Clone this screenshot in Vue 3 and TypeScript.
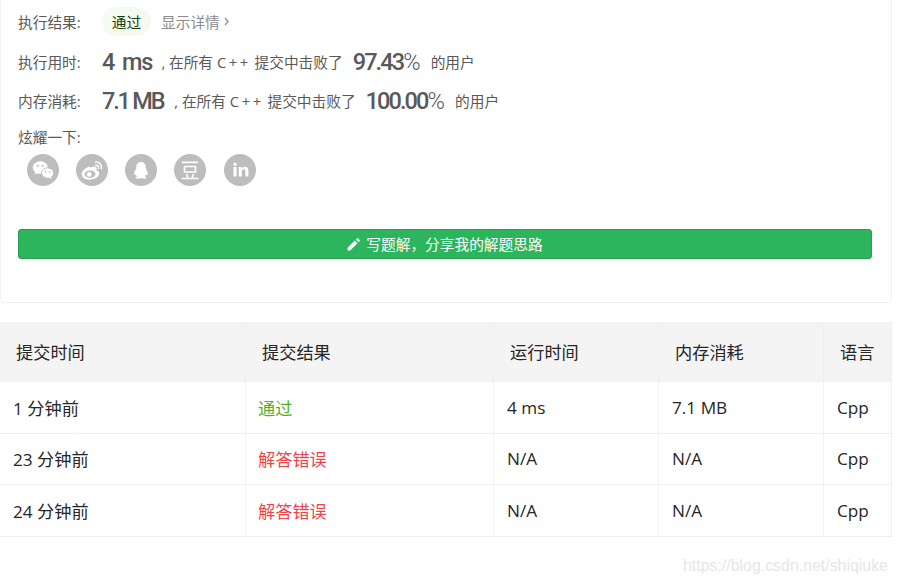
<script setup lang="ts">
interface Sub { time: string; result: string; ok: boolean; run: string; mem: string; lang: string }
const subs: Sub[] = [
  { time: '1 分钟前', result: '通过', ok: true, run: '4 ms', mem: '7.1 MB', lang: 'Cpp' },
  { time: '23 分钟前', result: '解答错误', ok: false, run: 'N/A', mem: 'N/A', lang: 'Cpp' },
  { time: '24 分钟前', result: '解答错误', ok: false, run: 'N/A', mem: 'N/A', lang: 'Cpp' },
]
</script>

<template>
  <div class="page">
    <section class="card">
      <div class="row first">
        <span class="label">执行结果:</span>
        <span class="pill">通过</span>
        <span class="detail">显示详情 <svg width="6" height="9" viewBox="0 0 6 9"><path d="M1 1l3.2 3.5L1 8" fill="none" stroke="#8c8c8c" stroke-width="1.2"/></svg></span>
      </div>
      <div class="row stat">
        <span class="label">执行用时:</span>
        <b class="big">4 ms</b>
        <span class="note comma">, 在所有 <span class="cpp">C++</span> 提交中击败了</span>
        <b class="big pct">97.43<i>%</i></b>
        <span class="note">的用户</span>
      </div>
      <div class="row stat mem">
        <span class="label">内存消耗:</span>
        <b class="big tight">7.1 MB</b>
        <span class="note comma wide">, 在所有 <span class="cpp">C++</span> 提交中击败了</span>
        <b class="big pct">100.00<i>%</i></b>
        <span class="note">的用户</span>
      </div>
      <div class="share-label">炫耀一下:</div>
      <div class="share">
        <span class="ic">
          <svg viewBox="0 0 32 32" width="32" height="32" fill="#fff">
            <ellipse cx="13.3" cy="13.6" rx="7.6" ry="6.3"/>
            <path d="M8.5 17.5l-1 3.2 3.6-1.9z"/>
            <ellipse cx="20.6" cy="19" rx="6.2" ry="5.2" stroke="#bdbdbd" stroke-width="1"/>
            <path d="M23.5 22.5l1.6 2.6-3.8-1.6z"/>
            <circle cx="10.8" cy="11.8" r="1.1" fill="#bdbdbd"/><circle cx="15.8" cy="11.8" r="1.1" fill="#bdbdbd"/>
            <circle cx="18.5" cy="17.8" r=".9" fill="#bdbdbd"/><circle cx="22.7" cy="17.8" r=".9" fill="#bdbdbd"/>
          </svg>
        </span>
        <span class="ic">
          <svg viewBox="0 0 32 32" width="32" height="32">
            <path d="M14 12.6c-4.8 1-8.4 4.6-8.2 8.2.2 3.2 4 5.2 8.4 4.9 5-.3 9.2-3.2 9-6.6-.1-1.7-1.5-2.5-2.8-2.9.8-1.9.3-3.100-1.200-3.500-1.300-.3-3.300.1-5.200 1z" fill="#fff"/>
            <ellipse cx="14" cy="20.200" rx="5.400" ry="3.700" fill="#bdbdbd"/>
            <circle cx="13.200" cy="20.400" r="2.300" fill="#fff"/>
            <path d="M19.500 8.200c3.800-.6 6.700 2.600 5.700 6.500M19.900 11.300c1.900-.3 3.100 1.200 2.600 3" fill="none" stroke="#fff" stroke-width="1.500" stroke-linecap="round"/>
          </svg>
        </span>
        <span class="ic">
          <svg viewBox="0 0 32 32" width="32" height="32" fill="#fff">
            <path d="M16 8c-3 0-4.700 2.200-4.700 5 0 .8 0 1.300-.3 1.900-.9 1.700-2.200 3.800-1.800 5.800.3.800.9.300 1.500-.5.300 1 .8 1.800 1.500 2.400-1 .4-1.800.9-1.600 1.500.2.700 2.900.6 4.400.1.400-.1 1.600-.1 2 0 1.500.5 4.200.6 4.400-.1.200-.6-.6-1.100-1.600-1.500.7-.6 1.200-1.400 1.500-2.400.6.800 1.200 1.300 1.500.5.400-2-.9-4.100-1.800-5.800-.3-.6-.3-1.100-.3-1.900 0-2.800-1.700-5-4.700-5z"/>
          </svg>
        </span>
        <span class="ic">
          <svg viewBox="0 0 32 32" width="32" height="32" fill="none" stroke="#fff" stroke-width="1.600">
            <path d="M8 8.400h16M10.500 12.500h11v5.500h-11zM7.500 24.500h17M12.500 20l1.500 4.300M19.500 20l-1.500 4.300"/>
          </svg>
        </span>
        <span class="ic in">
          <svg viewBox="0 0 32 32" width="32" height="32" fill="#fff">
            <rect x="9.500" y="13" width="3" height="9.500"/>
            <circle cx="11" cy="10.300" r="1.700"/>
            <path d="M14.800 13h2.900v1.400c.6-1 1.700-1.700 3.100-1.700 2.700 0 3.600 1.700 3.600 4.400v5.400h-3v-4.900c0-1.300-.4-2.300-1.600-2.300-1.300 0-2 1-2 2.300v4.900h-3z"/>
          </svg>
        </span>
      </div>
      <button class="write" type="button">
        <svg width="14" height="14" viewBox="0 0 14 14" fill="#fff"><path d="M0.500 10.800V13.500H3.200L10.500 6.200 7.800 3.500zM12.800 3.900c.3-.3.3-.7 0-1L11.100 1.200c-.3-.3-.7-.3-1 0L8.800 2.500 11.500 5.200z"/></svg>
        <span class="write-text">写题解&#65292;分享我的解题思路</span>
      </button>
    </section>

    <div class="table">
      <div class="tr head">
        <div class="td c1">提交时间</div>
        <div class="td c2">提交结果</div>
        <div class="td c3">运行时间</div>
        <div class="td c4">内存消耗</div>
        <div class="td c5">语言</div>
      </div>
      <div v-for="s in subs" :key="s.time" class="tr">
        <div class="td c1">{{ s.time }}</div>
        <div class="td c2" :class="s.ok ? 'ok' : 'bad'">{{ s.result }}</div>
        <div class="td c3">{{ s.run }}</div>
        <div class="td c4">{{ s.mem }}</div>
        <div class="td c5">{{ s.lang }}</div>
      </div>
    </div>

    <div class="mark">https://blog.csdn.net/shiqiuke</div>
  </div>
</template>

<style>
html, body { margin: 0; background: #fff; }
</style>

<style scoped>
.page {
  width: 897px;
  height: 583px;
  overflow: hidden;
  position: relative;
  font-family: "Open Sans", "Noto Sans CJK SC", sans-serif;
  color: #262626;
}
.card {
  box-sizing: border-box;
  width: 892px;
  height: 303px;
  padding: 6px 19px 0 17px;
  border: 1px solid #f0f0f0;
  border-top: 0;
  border-radius: 0 0 5px 5px;
}
.row { display: flex; align-items: center; color: #595959; }
.first { height: 30px; }
.stat { height: 40px; }
.first + .stat { margin-top: 5px; }
.mem { margin-top: -1px; }
.label { width: 84px; font-size: 14.700px; color: #595959; flex: none; white-space: nowrap; }
.pill {
  width: 49px; height: 29px; border-radius: 15px; background: #f6fbf2;
  display: flex; align-items: center; justify-content: center;
  font-size: 14.700px; color: #12400c;
}
.detail { margin-left: 10px; font-size: 14.700px; color: #8c8c8c; display: flex; align-items: center; gap: 4px; }
.big {
  font-family: Roboto, sans-serif; font-size: 23.500px; font-weight: 500; color: #595959;
  letter-spacing: -1.100px; word-spacing: 3px;
  position: relative; top: 1px;
}
.big i { font-style: normal; font-weight: 300; }
.tight { letter-spacing: -2.200px; word-spacing: 0; }
.note { font-size: 14.700px; color: #595959; white-space: nowrap; }
.cpp { letter-spacing: 2.600px; }
.comma { margin-left: 9px; }
.comma.wide { margin-left: 11px; }
.pct { margin-left: 10px; margin-right: 12px; letter-spacing: -1.900px; }
.share-label { margin-top: 7px; font-size: 14.700px; color: #595959; line-height: 20px; }
.share { display: flex; gap: 17px; margin: 7px 0 0 9px; }
.ic { width: 32px; height: 32px; border-radius: 50%; background: #bdbdbd; display: block; }
.ic.in { margin-left: 1px; }
.ic svg { display: block; }
.write {
  display: flex; align-items: center; justify-content: center; gap: 5px;
  box-sizing: border-box;
  width: 854px; height: 30px; margin-top: 43px; padding: 0;
  background: #2db55d; border: 1px solid #2a9d52; border-radius: 3px;
  color: #fff; font: 14.700px "Open Sans", "Noto Sans CJK SC", sans-serif;
}
.write-text { position: relative; top: -1px; }
.table {
  box-sizing: border-box;
  width: 892px; margin-top: 19px;
  border-top: 1px solid #f0f0f0;
}
.tr {
  display: grid;
  grid-template-columns: 246px 248px 165px 165px 68px;
  height: 52px;
  border-bottom: 1px solid #f0f0f0;
  box-sizing: border-box;
}
.tr:nth-child(3) { height: 51px; }
.head { height: 59px; background: #f4f4f4; border-bottom: 0; }
.td {
  display: flex; align-items: center; box-sizing: border-box;
  border-right: 1px solid #f0f0f0;
  padding-left: 13px;
  font-size: 17.200px; color: #262626;
  padding-bottom: 1px;
}
.c2 { padding-left: 12px; }
.head .td { padding-left: 16px; padding-bottom: 2px; }
.ok { color: #52b01c; }
.bad { color: #f0424a; }
.mark {
  position: absolute; left: 683px; top: 557px;
  font: 15.900px "Liberation Sans", sans-serif; color: #e6e6e6; white-space: nowrap;
}
</style>
